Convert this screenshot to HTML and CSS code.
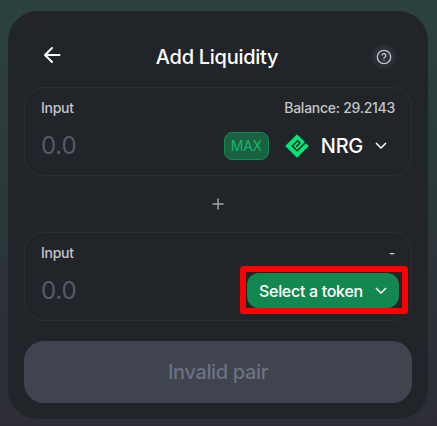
FILE: index.html
```html
<!DOCTYPE html>
<html lang="en">
<head>
<meta charset="utf-8">
<title>Add Liquidity</title>
<link rel="stylesheet" href="styles.css">
</head>
<body>
<main class="card">
  <header class="header">
    <svg class="back" viewBox="0 0 24 24"><path d="M19.5 12H5M12 5l-7 7 7 7"/></svg>
    <h1 class="title">Add Liquidity</h1>
    <span class="help"><svg viewBox="0 0 24 24"><circle cx="12" cy="12" r="10"/><path d="M9.1 9a3 3 0 0 1 5.8 1c0 2-3 2.6-3 4M12 17h.01"/></svg></span>
  </header>
  <section class="panel">
    <div class="row labels"><span>Input</span><span>Balance: 29.2143</span></div>
    <div class="row entry">
      <span class="amount">0.0</span>
      <span class="max">MAX</span>
      <span class="token">
        <svg class="logo" viewBox="0 0 24 24"><path class="logo-body" d="M12 1.2 22.8 12 12 22.8 1.2 12Z"/><path class="logo-cut" d="M22 7.2 12 16.7 7.3 12 12.6 6.7 14.9 9 11.2 12.7"/></svg>
        <span class="symbol">NRG</span>
        <svg class="chevron" viewBox="0 0 12 7"><path d="M1 1l5 5 5-5"/></svg>
      </span>
    </div>
  </section>
  <div class="plus"><svg viewBox="0 0 12 12"><path d="M6 .5v11M.5 6h11"/></svg></div>
  <section class="panel">
    <div class="row labels"><span>Input</span><span>-</span></div>
    <div class="row entry">
      <span class="amount">0.0</span>
      <span class="select">Select a token<svg class="chevron" viewBox="0 0 12 7"><path d="M1 1l5 5 5-5"/></svg><span class="highlight"></span></span>
    </div>
  </section>
  <div class="submit">Invalid pair</div>
</main>
</body>
</html>
```
FILE: styles.css
```css
* { box-sizing: border-box; }
body {
  margin: 0;
  height: 426px;
  padding: 11px 9px 7px 8px;
  background: linear-gradient(180deg, #2b423f 0%, #2b3a3a 38%, #2c3138 75%, #2d2d36 100%);
  font-family: Inter, sans-serif;
  font-weight: 500;
  color: #fff;
}
svg { display: block; fill: none; stroke: currentColor; }
.card {
  height: 408px;
  padding: 16px;
  border-radius: 30px;
  background: #212429;
}
.header {
  display: flex;
  align-items: center;
  justify-content: space-between;
  height: 60px;
  padding: 0 16px;
}
.back { width: 24px; height: 24px; stroke-width: 2; stroke-linecap: round; stroke-linejoin: round; margin-top: -4px; }
.title { margin: 0 2px 0 0; font-size: 20px; font-weight: 500; line-height: 24px; letter-spacing: -0.28px; }
.help {
  display: flex;
  align-items: center;
  justify-content: center;
  width: 24px;
  height: 24px;
  border-radius: 50%;
  background: #2c2f36;
  color: #c3c5cb;
}
.help svg { width: 16px; height: 16px; stroke-width: 2; stroke-linecap: round; }
.panel {
  height: 89px;
  border: 1px solid #2c2f36;
  border-radius: 20px;
  padding: 10px 12px 0 16px;
}
.row { display: flex; align-items: center; justify-content: space-between; }
.labels { height: 18px; padding-right: 4px; font-size: 14px; letter-spacing: -0.27px; color: #c3c5cb; }
.entry { height: 35px; margin-top: 12px; }
.amount { flex: 1; font-size: 24px; font-weight: 400; letter-spacing: -0.2px; color: #565a69; }
.max {
  width: 45px;
  height: 28px;
  border: 1px solid #128a50;
  border-radius: 8px;
  background: #1a6043;
  color: #14b866;
  font-size: 14px;
  font-weight: 400;
  line-height: 26px;
  letter-spacing: -0.2px;
  text-align: center;
}
.token { display: flex; align-items: center; padding: 0 12px 0 16px; }
.logo { width: 24px; height: 24px; }
.logo-body { fill: #00e676; stroke: #00e676; stroke-width: 1.5; stroke-linejoin: round; }
.logo-cut { stroke: #212429; stroke-width: 1.5; }
.symbol { margin: 0 12px; font-size: 20px; letter-spacing: -0.3px; }
.chevron { width: 12px; height: 7px; stroke-width: 1.5; }
.plus { display: flex; align-items: center; justify-content: center; height: 56px; color: #a2a4a8; }
.plus svg { width: 12px; height: 12px; stroke-width: 1.5; }
.select {
  position: relative;
  display: flex;
  align-items: center;
  justify-content: space-between;
  width: 152px;
  height: 35px;
  padding: 0 12px;
  border-radius: 12px;
  background: #128850;
  font-size: 16px;
  letter-spacing: -0.3px;
}
.highlight {
  position: absolute;
  top: -7px;
  left: -7px;
  width: 168px;
  height: 48px;
  border: 6px solid #f00;
  border-radius: 4px 4px 3px 3px;
}
.submit {
  display: flex;
  align-items: center;
  justify-content: center;
  height: 62px;
  margin-top: 20px;
  border-radius: 20px;
  background: #40444f;
  color: #6c7284;
  font-size: 20px;
  letter-spacing: -0.35px;
}
```
